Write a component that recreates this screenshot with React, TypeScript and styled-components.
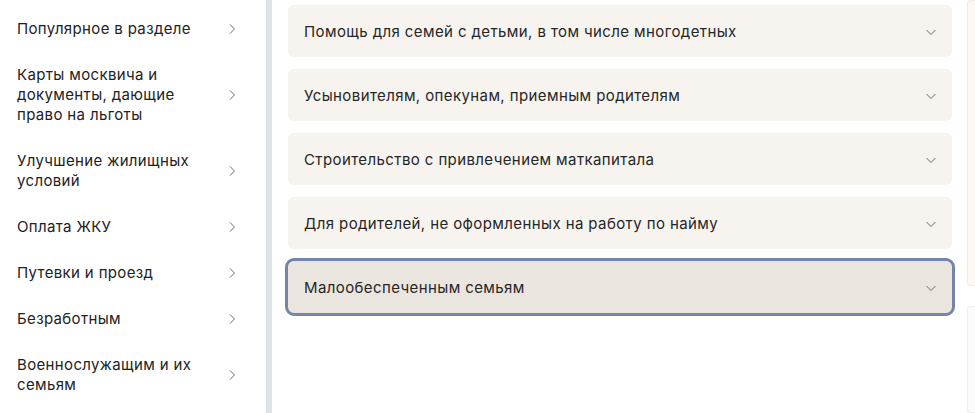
import React from 'react';
import styled, { createGlobalStyle } from 'styled-components';

const GlobalStyle = createGlobalStyle`
  html, body {
    margin: 0;
    padding: 0;
    background: #ffffff;
    font-family: Inter, "Noto Sans", "Liberation Sans", sans-serif;
    color: #222222;
  }
`;

const Page = styled.div`
  width: 975px;
  height: 413px;
  display: flex;
  overflow: hidden;
`;

const Sidebar = styled.nav`
  width: 272px;
  flex-shrink: 0;
  padding-top: 6px;
  box-sizing: border-box;
  border-right: 6px solid #e0e2e9;
`;

const SideItem = styled.div`
  display: flex;
  align-items: center;
  justify-content: space-between;
  padding: 13px 30px 13px 17px;
`;

const SideLabel = styled.span`
  width: 192px;
  font-size: 15px;
  line-height: 20px;
  color: #222;
  letter-spacing: 0.35px;
`;

const Main = styled.main`
  flex: 1;
  display: flex;
  gap: 15px;
  padding: 5px 0 0 16px;
  min-width: 0;
`;

const List = styled.div`
  width: 664px;
  flex-shrink: 0;
  display: flex;
  flex-direction: column;
  gap: 12px;
`;

const Card = styled.div<{ $active?: boolean }>`
  height: 52px;
  box-sizing: border-box;
  display: flex;
  align-items: center;
  justify-content: space-between;
  padding: 2px 15px 0 16px;
  border-radius: 6px;
  background: ${(p) => (p.$active ? '#ebe5e0' : '#f7f4ef')};
  outline: ${(p) => (p.$active ? '3px solid #7385a9' : 'none')};
`;

const CardTitle = styled.span`
  font-size: 15px;
  line-height: 20px;
  color: #262626;
  letter-spacing: 0.4px;
`;

const Aside = styled.div`
  flex: 1;
  display: flex;
  flex-direction: column;
  gap: 20px;
  margin-top: -5px;
`;

const Peek = styled.div<{ $tone: 'warm' | 'cool' }>`
  height: ${(p) => (p.$tone === 'warm' ? '325px' : '120px')};
  border: 1px solid ${(p) => (p.$tone === 'warm' ? '#f6ebe1' : '#eeeef2')};
  border-right: none;
  border-radius: 4px 0 0 4px;
  background: ${(p) => (p.$tone === 'warm' ? '#fcf8f4' : '#fbfbfc')};
`;

const ChevronRight = () => (
  <svg width="8" height="12" viewBox="0 0 8 12" fill="none">
    <path d="M2 1.5L6.5 6L2 10.5" stroke="#6a6a6a" strokeWidth="1" />
  </svg>
);

const ChevronDown = () => (
  <svg width="12" height="8" viewBox="0 0 12 8" fill="none">
    <path d="M1.5 2L6 6.5L10.5 2" stroke="#6a6a6a" strokeWidth="1" />
  </svg>
);

const sideItems = [
  'Популярное в разделе',
  'Карты москвича и документы, дающие право на льготы',
  'Улучшение жилищных условий',
  'Оплата ЖКУ',
  'Путевки и проезд',
  'Безработным',
  'Военнослужащим и их семьям',
];

const cards = [
  'Помощь для семей с детьми, в том числе многодетных',
  'Усыновителям, опекунам, приемным родителям',
  'Строительство с привлечением маткапитала',
  'Для родителей, не оформленных на работу по найму',
  'Малообеспеченным семьям',
];

const App: React.FC = () => (
  <>
    <GlobalStyle />
    <Page>
      <Sidebar>
        {sideItems.map((s) => (
          <SideItem key={s}>
            <SideLabel>{s}</SideLabel>
            <ChevronRight />
          </SideItem>
        ))}
      </Sidebar>
      <Main>
        <List>
          {cards.map((c, i) => (
            <Card key={c} $active={i === cards.length - 1}>
              <CardTitle>{c}</CardTitle>
              <ChevronDown />
            </Card>
          ))}
        </List>
        <Aside>
          <Peek $tone="warm" />
          <Peek $tone="cool" />
        </Aside>
      </Main>
    </Page>
  </>
);

export default App;
